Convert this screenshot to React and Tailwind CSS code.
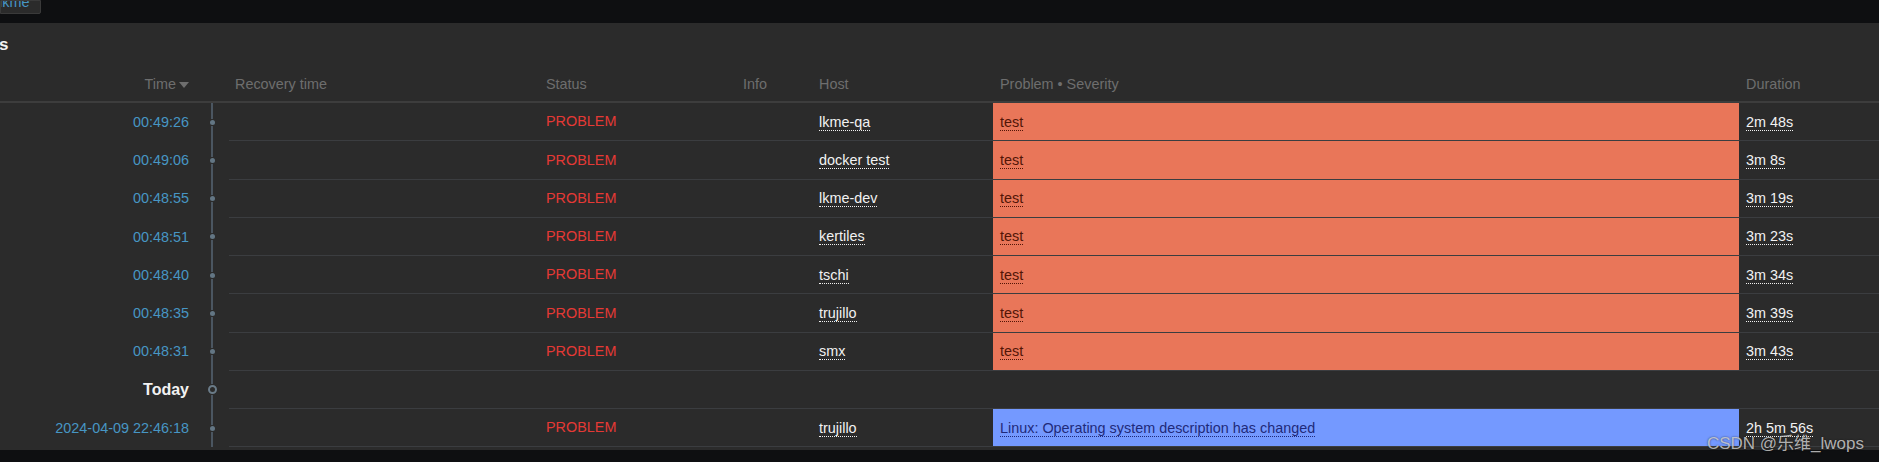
import React from 'react';

const rows = [
  { time: '00:49:26', host: 'lkme-qa', problem: 'test', duration: '2m 48s' },
  { time: '00:49:06', host: 'docker test', problem: 'test', duration: '3m 8s' },
  { time: '00:48:55', host: 'lkme-dev', problem: 'test', duration: '3m 19s' },
  { time: '00:48:51', host: 'kertiles', problem: 'test', duration: '3m 23s' },
  { time: '00:48:40', host: 'tschi', problem: 'test', duration: '3m 34s' },
  { time: '00:48:35', host: 'trujillo', problem: 'test', duration: '3m 39s' },
  { time: '00:48:31', host: 'smx', problem: 'test', duration: '3m 43s' },
  { today: true },
  { time: '2024-04-09 22:46:18', host: 'trujillo', problem: 'Linux: Operating system description has changed', duration: '2h 5m 56s', info: true },
];

function Timeline({ ring }) {
  return (
    <div className="w-[29px] flex flex-col items-center pr-[5px]">
      <div className="flex-1 w-[2px] bg-[#4b5661]" />
      {ring ? (
        <div className="w-[9px] h-[9px] rounded-full border-2 border-[#6a7b88] my-[1px]" />
      ) : (
        <div className="w-[5px] h-[5px] rounded-full bg-[#637684] my-[1px]" />
      )}
      <div className="flex-1 w-[2px] bg-[#4b5661]" />
    </div>
  );
}

function Row({ row }) {
  return (
    <div className="flex h-[38.25px]">
      <div className="w-[200px] pr-[11px] pt-[1px] flex items-center justify-end">
        {row.today ? (
          <span className="text-[16px] font-bold text-[#f2f2f2]">Today</span>
        ) : (
          <span className="text-[#4796c4]">{row.time}</span>
        )}
      </div>
      <Timeline ring={row.today} />
      <div className="flex-1 flex border-b border-[#3b3d40]">
        <div className="w-[311px]" />
        <div className="w-[197px] pl-[6px] pt-[1px] flex items-center text-[#e53935]">
          {!row.today && 'PROBLEM'}
        </div>
        <div className="w-[76px]" />
        <div className="w-[180px] pl-[6px] pt-[2px] flex items-center">
          {!row.today && (
            <span className="text-[#f2f2f2] border-b border-dotted border-[#f2f2f2] leading-[15px]">{row.host}</span>
          )}
        </div>
        <div
          className={
            'w-[746px] pl-[7px] pt-[2px] flex items-center ' +
            (row.today ? '' : row.info ? 'bg-[#7499ff]' : 'bg-[#e97659]')
          }
        >
          {!row.today && (
            <span
              className={
                'border-b border-dotted leading-[15px] ' +
                (row.info ? 'text-[#1f2a7a] border-[#1f2a7a]' : 'text-[#521507] border-[#521507]')
              }
            >
              {row.problem}
            </span>
          )}
        </div>
        <div className="flex-1 pl-[7px] pt-[2px] flex items-center">
          {!row.today && (
            <span className="text-[#f2f2f2] border-b border-dotted border-[#f2f2f2] leading-[15px]">{row.duration}</span>
          )}
        </div>
      </div>
    </div>
  );
}

export default function App() {
  return (
    <div className="w-[1879px] h-[462px] bg-[#0e0f11] overflow-hidden relative font-['Liberation_Sans',Arial,sans-serif] text-[14.4px]">
      {/* top bar with cropped badge */}
      <div className="h-[23px]">
        <div className="w-[41px] h-[14px] bg-[#2b2b2b] border border-[#3a3a3a] rounded-br-[2px] overflow-hidden flex items-start">
          <span className="text-[#4796c4] -ml-[2px] -mt-[6px] leading-[15px]">lkme</span>
        </div>
      </div>

      {/* panel */}
      <div className="bg-[#2b2b2b] h-[427px]">
        <div className="h-[43px] flex items-center">
          <span className="text-[#f2f2f2] font-bold text-[17px] -ml-[1px]">s</span>
        </div>

        {/* table header */}
        <div className="flex h-[37px] border-b-2 border-[#3d3d3d] text-[#6e6e6e]">
          <div className="w-[200px] pr-[11px] pt-[3px] flex items-center justify-end gap-[3px]">
            <span>Time</span>
            <svg width="10" height="6" viewBox="0 0 10 6">
              <path d="M0 0 L10 0 L5 6 Z" fill="#6e6e6e" />
            </svg>
          </div>
          <div className="w-[29px]" />
          <div className="flex-1 flex items-center pt-[3px]">
            <div className="w-[311px] pl-[6px]">Recovery time</div>
            <div className="w-[197px] pl-[6px]">Status</div>
            <div className="w-[76px] pl-[6px]">Info</div>
            <div className="w-[180px] pl-[6px]">Host</div>
            <div className="w-[746px] pl-[7px]">Problem • Severity</div>
            <div className="flex-1 pl-[7px]">Duration</div>
          </div>
        </div>

        {rows.map((row, i) => (
          <Row key={i} row={row} />
        ))}
      </div>

      {/* watermark */}
      <div className="absolute right-[15px] bottom-[6px] text-[17px] text-[#d9d9d9]/80 font-['Liberation_Sans','Noto_Sans_CJK_SC',sans-serif] [text-shadow:0_0_2px_rgba(0,0,0,0.6)]">
        CSDN @乐维_lwops
      </div>
    </div>
  );
}
